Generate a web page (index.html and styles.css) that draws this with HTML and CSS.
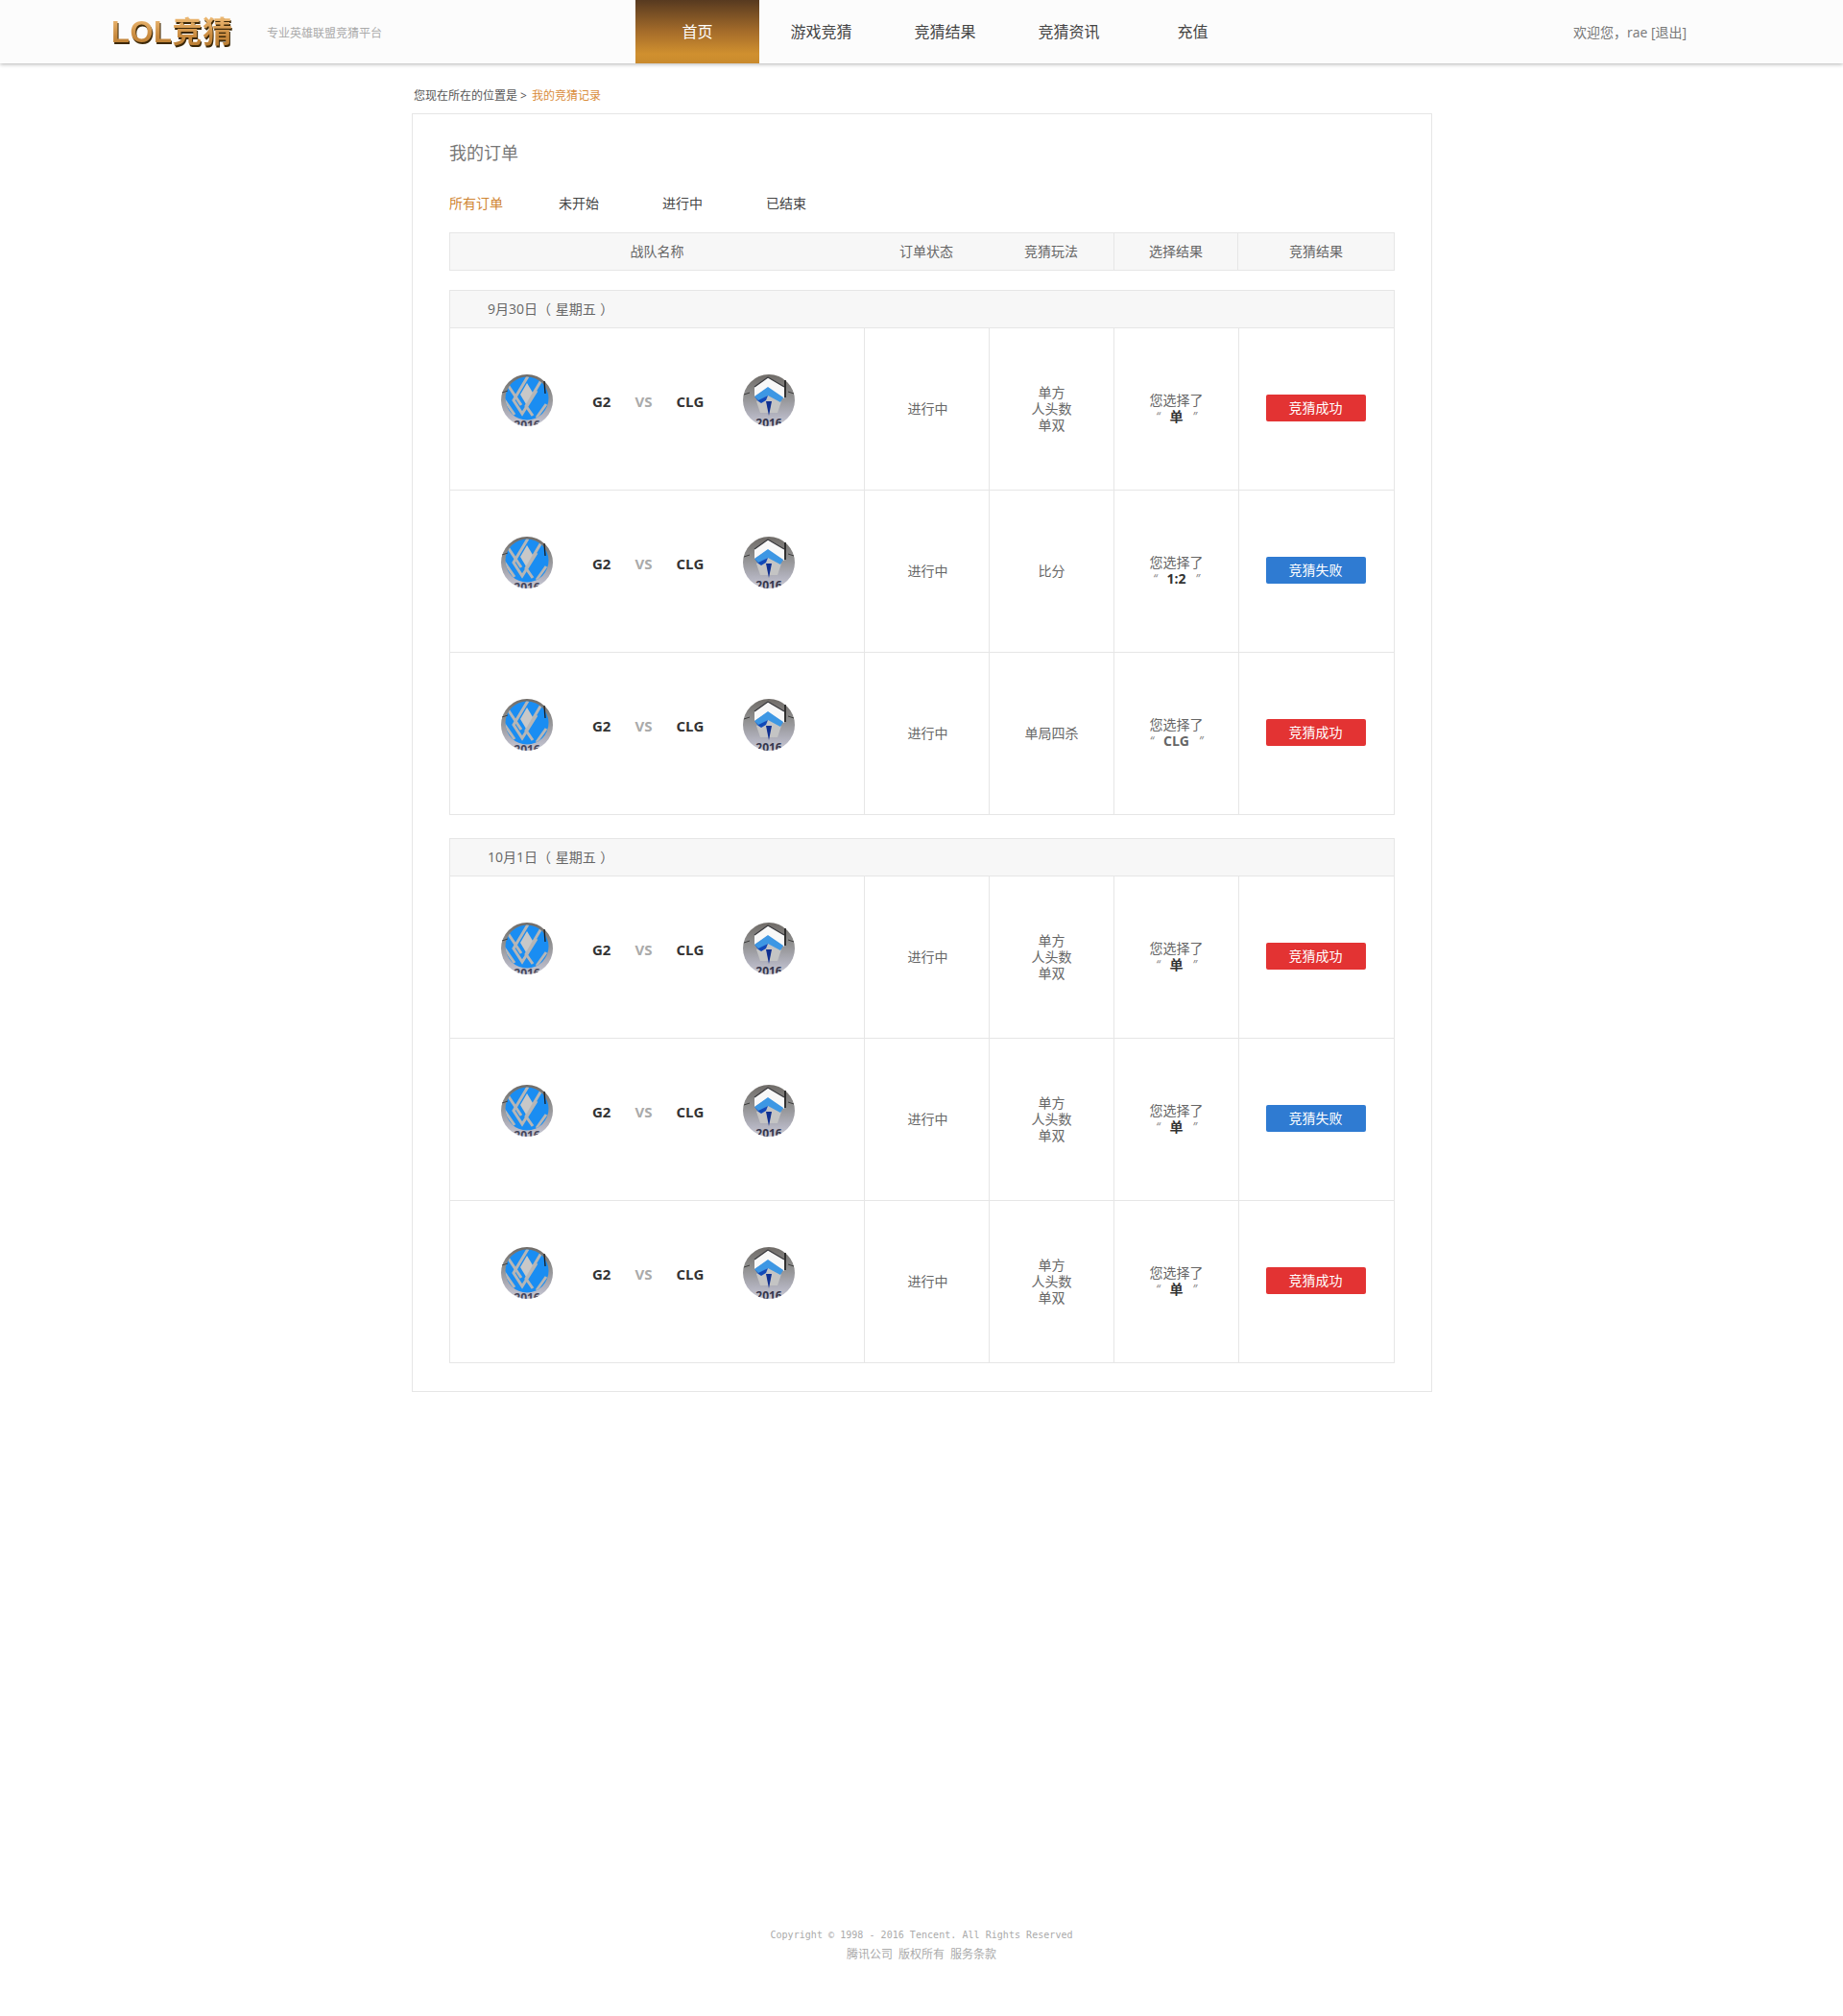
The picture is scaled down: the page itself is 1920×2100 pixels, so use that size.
FILE: index.html
```html
<!DOCTYPE html>
<html lang="zh-CN">
<head>
    <meta charset="UTF-8">
    <title>我的竞猜记录</title>
    <link rel="stylesheet" href="styles.css">
</head>
<body>
    <!-- 队徽 -->
    <svg class="svg-defs" width="0" height="0">
        <defs>
            <linearGradient id="metal" x1="0" y1="0" x2="0" y2="1">
                <stop offset="0" stop-color="#6f6b67"/>
                <stop offset="0.4" stop-color="#8f8f8f"/>
                <stop offset="0.8" stop-color="#b4b4c0"/>
                <stop offset="1" stop-color="#cacad4"/>
            </linearGradient>
            <clipPath id="badgeClip"><circle cx="27" cy="27" r="27"/></clipPath>
            <clipPath id="discClip"><circle cx="27" cy="25" r="22.5"/></clipPath>
        </defs>
        <symbol id="badgeG2" viewBox="0 0 54 54">
            <circle cx="27" cy="27" r="27" fill="url(#metal)"/>
            <circle cx="27" cy="25" r="22.5" fill="#1a8df2"/>
            <g clip-path="url(#discClip)" fill="none" stroke="#b6b6b6" stroke-width="3">
                <path d="M7 11L21 32"/>
                <path d="M28 2L13 27L22 41L37 17"/>
                <path d="M42 6L26 33L33 43"/>
                <path d="M47 31L37 45"/>
                <path d="M3 26L14 42"/>
                <path d="M27 9L33 19L26 31L20 21Z" fill="#c8c8c8" stroke="none"/>
            </g>
            <path d="M45 7L46 20" stroke="#1b1b1b" stroke-width="1.3" fill="none"/>
            <path d="M1 19L7 17" stroke="#444" stroke-width="1" fill="none"/>
            <g clip-path="url(#badgeClip)"><text class="badge-year" x="27" y="57" fill="#45465c">2016</text></g>
        </symbol>
        <symbol id="badgeCLG" viewBox="0 0 54 54">
            <circle cx="27" cy="27" r="27" fill="url(#metal)"/>
            <path d="M14 28L27 20L40 28L36 40H18Z" fill="#c4c4c4"/>
            <path d="M26 3L43 13V25L26 14L12 23V13Z" fill="#f8f8f8"/>
            <path d="M26 3L43 13M26 3L12 13" stroke="#3a3a3e" stroke-width="1.3" fill="none"/>
            <path d="M44 6V24" stroke="#1a1a1a" stroke-width="1.6" fill="none"/>
            <path d="M26 13L42 24L39 29L26 22L16 28L12 23Z" fill="#3d97e4"/>
            <path d="M12 23L16 28L19 30L24 27L26 22L16 27Z" fill="#1148b8"/>
            <path d="M24 28H30L27 43Z" fill="#0f2f90"/>
            <path d="M1 21L7 19M47 18L53 20" stroke="#3e3e3e" stroke-width="1" fill="none"/>
            <g clip-path="url(#badgeClip)"><text class="badge-year" x="27" y="54.5" fill="#35364c">2016</text></g>
        </symbol>
    </svg>

    <!-- 顶部导航 -->
    <header class="top-bar">
        <a class="logo">LOL竞猜</a>
        <span class="slogan">专业英雄联盟竞猜平台</span>
        <nav class="nav">
            <a class="nav-item active">首页</a>
            <a class="nav-item">游戏竞猜</a>
            <a class="nav-item">竞猜结果</a>
            <a class="nav-item">竞猜资讯</a>
            <a class="nav-item">充值</a>
        </nav>
        <div class="user-info">欢迎您，rae [退出]</div>
    </header>

    <div class="page">
        <div class="crumbs">您现在所在的位置是 &gt; <span class="crumbs-now">我的竞猜记录</span></div>

        <div class="order-card">
            <h1 class="order-title">我的订单</h1>
            <div class="tabs">
                <a class="tab on">所有订单</a>
                <a class="tab">未开始</a>
                <a class="tab">进行中</a>
                <a class="tab">已结束</a>
            </div>

            <div class="table-head">
                <div class="th-team">战队名称</div>
                <div class="th-status">订单状态</div>
                <div class="th-play">竞猜玩法</div>
                <div class="th-pick">选择结果</div>
                <div class="th-result">竞猜结果</div>
            </div>

            <!-- 9月30日 -->
            <section class="day">
                <div class="day-title">9月30日（ 星期五 ）</div>
                <div class="row">
                    <div class="cell team">
                        <svg class="badge"><use href="#badgeG2"/></svg>
                        <b class="team-a">G2</b><b class="vs">VS</b><b class="team-b">CLG</b>
                        <svg class="badge"><use href="#badgeCLG"/></svg>
                    </div>
                    <div class="cell status">进行中</div>
                    <div class="cell play"><p>单方<br>人头数<br>单双</p></div>
                    <div class="cell pick"><p>您选择了<br><i>“</i><b>单</b><i>”</i></p></div>
                    <div class="cell result"><a class="btn win">竞猜成功</a></div>
                </div>
                <div class="row">
                    <div class="cell team">
                        <svg class="badge"><use href="#badgeG2"/></svg>
                        <b class="team-a">G2</b><b class="vs">VS</b><b class="team-b">CLG</b>
                        <svg class="badge"><use href="#badgeCLG"/></svg>
                    </div>
                    <div class="cell status">进行中</div>
                    <div class="cell play"><p>比分</p></div>
                    <div class="cell pick"><p>您选择了<br><i>“</i><b>1:2</b><i>”</i></p></div>
                    <div class="cell result"><a class="btn lose">竞猜失败</a></div>
                </div>
                <div class="row">
                    <div class="cell team">
                        <svg class="badge"><use href="#badgeG2"/></svg>
                        <b class="team-a">G2</b><b class="vs">VS</b><b class="team-b">CLG</b>
                        <svg class="badge"><use href="#badgeCLG"/></svg>
                    </div>
                    <div class="cell status">进行中</div>
                    <div class="cell play"><p>单局四杀</p></div>
                    <div class="cell pick"><p>您选择了<br><i>“</i><b class="grey">CLG</b><i>”</i></p></div>
                    <div class="cell result"><a class="btn win">竞猜成功</a></div>
                </div>
            </section>

            <!-- 10月1日 -->
            <section class="day">
                <div class="day-title">10月1日（ 星期五 ）</div>
                <div class="row">
                    <div class="cell team">
                        <svg class="badge"><use href="#badgeG2"/></svg>
                        <b class="team-a">G2</b><b class="vs">VS</b><b class="team-b">CLG</b>
                        <svg class="badge"><use href="#badgeCLG"/></svg>
                    </div>
                    <div class="cell status">进行中</div>
                    <div class="cell play"><p>单方<br>人头数<br>单双</p></div>
                    <div class="cell pick"><p>您选择了<br><i>“</i><b>单</b><i>”</i></p></div>
                    <div class="cell result"><a class="btn win">竞猜成功</a></div>
                </div>
                <div class="row">
                    <div class="cell team">
                        <svg class="badge"><use href="#badgeG2"/></svg>
                        <b class="team-a">G2</b><b class="vs">VS</b><b class="team-b">CLG</b>
                        <svg class="badge"><use href="#badgeCLG"/></svg>
                    </div>
                    <div class="cell status">进行中</div>
                    <div class="cell play"><p>单方<br>人头数<br>单双</p></div>
                    <div class="cell pick"><p>您选择了<br><i>“</i><b>单</b><i>”</i></p></div>
                    <div class="cell result"><a class="btn lose">竞猜失败</a></div>
                </div>
                <div class="row">
                    <div class="cell team">
                        <svg class="badge"><use href="#badgeG2"/></svg>
                        <b class="team-a">G2</b><b class="vs">VS</b><b class="team-b">CLG</b>
                        <svg class="badge"><use href="#badgeCLG"/></svg>
                    </div>
                    <div class="cell status">进行中</div>
                    <div class="cell play"><p>单方<br>人头数<br>单双</p></div>
                    <div class="cell pick"><p>您选择了<br><i>“</i><b>单</b><i>”</i></p></div>
                    <div class="cell result"><a class="btn win">竞猜成功</a></div>
                </div>
            </section>
        </div>
    </div>

    <footer class="footer">
        <p class="copy">Copyright © 1998 - 2016 Tencent. All Rights Reserved</p>
        <p class="links">腾讯公司 版权所有 服务条款</p>
    </footer>
</body>
</html>
```

FILE: styles.css
```css
/* 基础 */
* {
    box-sizing: border-box;
}

body {
    margin: 0;
    background: #fff;
    color: #666;
    font-family: "Open Sans", "Noto Sans CJK SC", sans-serif;
    font-size: 14px;
}

p {
    margin: 0;
}

.svg-defs {
    position: absolute;
}

/* 顶部导航 */
.top-bar {
    display: flex;
    align-items: center;
    height: 66px;
    padding-left: 116px;
    background: #fcfcfc;
    box-shadow: 0 1px 4px rgba(0, 0, 0, 0.3);
}

.logo {
    width: 128px;
    height: 36px;
    margin-top: 2px;
    font-family: "Liberation Sans", "Noto Sans CJK SC", sans-serif;
    font-size: 31px;
    font-weight: bold;
    line-height: 36px;
    white-space: nowrap;
    letter-spacing: 0.5px;
    color: transparent;
    background: linear-gradient(#f0bd78, #c98a3e 60%, #b3782f);
    -webkit-background-clip: text;
    background-clip: text;
    filter: drop-shadow(1px 2px 0 #3c2808);
}

.slogan {
    margin: 2px 0 0 34px;
    width: 384px;
    font-size: 12px;
    color: #aaa;
}

.nav {
    display: flex;
    height: 66px;
}

.nav-item {
    width: 129px;
    font-size: 16px;
    line-height: 66px;
    text-align: center;
    color: #444;
}

.nav-item.active {
    color: #fff;
    background: linear-gradient(#573a20, #a56c2a 50%, #d0902f 85%, #c98a2d);
}

.user-info {
    margin-left: 332px;
    color: #777;
}

/* 面包屑 */
.page {
    width: 1063px;
    margin-left: 429px;
}

.crumbs {
    height: 52px;
    padding: 25px 0 0 2px;
    font-size: 12px;
    line-height: 18px;
    color: #555;
}

.crumbs-now {
    margin-left: 2px;
    color: #d98c3a;
}

/* 订单卡片 */
.order-card {
    height: 1332px;
    padding: 0 38px;
    border: 1px solid #e6e6e6;
}

.order-title {
    margin: 0;
    padding-top: 27px;
    font-size: 18px;
    font-weight: normal;
    line-height: 26px;
    color: #777;
}

.tabs {
    display: flex;
    gap: 66px;
    margin-top: 27px;
    line-height: 26px;
    color: #444;
}

.tab.on {
    margin-right: -8px;
    color: #cf8433;
}

.table-head {
    display: flex;
    height: 40px;
    margin-top: 17px;
    border: 1px solid #e6e6e6;
    background: #f7f7f7;
    line-height: 38px;
    text-align: center;
}

.th-team {
    width: 431px;
}

.th-status,
.th-play {
    width: 130px;
}

.th-pick {
    width: 130px;
    border-left: 1px solid #e6e6e6;
    border-right: 1px solid #e6e6e6;
}

.th-result {
    flex: 1;
}

/* 每日分组 */
.day {
    margin-top: 20px;
    border: 1px solid #e6e6e6;
    border-bottom: 0;
}

.day + .day {
    margin-top: 24px;
}

.day-title {
    height: 39px;
    padding-left: 39px;
    background: #f7f7f7;
    border-bottom: 1px solid #e6e6e6;
    line-height: 37px;
    word-spacing: 1px;
}

.row {
    display: flex;
    height: 169px;
    border-bottom: 1px solid #e6e6e6;
}

.cell {
    display: flex;
    align-items: center;
    justify-content: center;
    padding-bottom: 2px;
    border-left: 1px solid #e6e6e6;
    line-height: 17px;
    text-align: center;
}

.cell.team {
    align-items: flex-start;
    justify-content: flex-start;
    width: 431px;
    padding: 48px 0 0 53px;
    border-left: 0;
}

.badge {
    width: 54px;
    height: 54px;
}

.badge-year {
    font-family: "Open Sans", sans-serif;
    font-size: 12px;
    font-weight: bold;
    text-anchor: middle;
}

.team b {
    margin-top: 19px;
    line-height: 19px;
    font-size: 15px;
    color: #333;
}

.team-a {
    margin-left: 41px;
}

.team .vs {
    margin: 19px 25px 0;
    color: #aaa;
}

.team-b {
    margin-right: 41px;
}

.status,
.play,
.pick {
    width: 130px;
}

.status {
    padding-left: 2px;
}

.pick i {
    display: inline-block;
    font-size: 12px;
    line-height: 12px;
    color: #888;
    vertical-align: 1px;
}

.pick b {
    margin: 0 10px;
    color: #333;
}

.pick b.grey {
    color: #666;
}

.result {
    flex: 1;
    padding-right: 2px;
}

.btn {
    display: block;
    width: 104px;
    height: 28px;
    border-radius: 2px;
    color: #fff;
    line-height: 27px;
    text-align: center;
}

.btn.win {
    background: #e33333;
}

.btn.lose {
    background: #2f7bd2;
}

/* 页脚 */
.footer {
    margin-top: 556px;
    text-align: center;
    font-size: 12px;
    line-height: 20px;
    color: #aaa;
}

.copy {
    font-family: "DejaVu Sans Mono", monospace;
    font-size: 10px;
    letter-spacing: 0.04px;
}

.links {
    word-spacing: 3px;
}
```
